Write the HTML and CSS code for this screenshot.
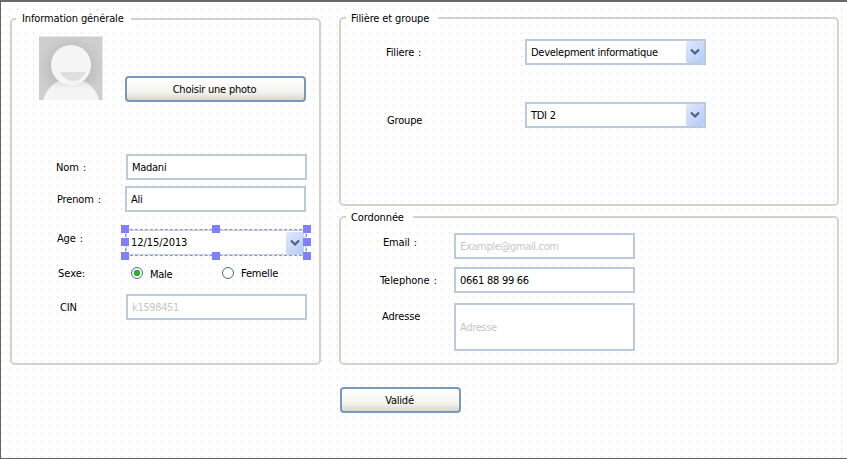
FILE: index.html
```html
<!DOCTYPE html>
<html lang="fr">
<head>
<meta charset="utf-8">
<title>Inscription</title>
<link rel="stylesheet" href="styles.css">
</head>
<body>
<main class="form">
  <section class="group group-info">
    <h2 class="legend legend-info"><span>Information générale</span></h2>
    <div class="photo-row">
      <svg class="avatar" width="64" height="64" viewBox="0 0 64 64">
        <defs>
          <radialGradient id="bg"><stop offset="0.5" stop-color="#bdbdbd"/><stop offset="1" stop-color="#cecece"/></radialGradient>
          <linearGradient id="body" x1="0" y1="0" x2="0" y2="1"><stop offset="0" stop-color="#dedede"/><stop offset="0.45" stop-color="#f5f5f5"/></linearGradient>
        </defs>
        <path fill="url(#bg)" d="M0 0h64v64H0z"/>
        <path fill="url(#body)" d="M4 64C8 52 16 45 24 44h17c9 2 16 9 19 20z"/>
        <circle cx="32" cy="29" r="20" fill="#f5f5f5"/>
        <path fill="#dedede" d="M21 36h26c-3 6-8 9-13 9s-10-3-13-9z"/>
        <path fill="none" stroke="#e6e6e6" d="M63.500 0v64M0 .5h64"/>
      </svg>
      <button class="button button-photo"><span>Choisir une photo</span></button>
    </div>
    <div class="row row-nom"><label>Nom :</label><div class="field"><span>Madani</span></div></div>
    <div class="row row-prenom"><label>Prenom :</label><div class="field"><span>Ali</span></div></div>
    <div class="row row-age"><label>Age :</label>
      <div class="field date"><span>12/15/2013</span><i class="arrow"><svg width="10" height="8" viewBox="0 0 10 8"><path d="M1 1.500l4 4 4-4"/></svg></i>
        <b class="handle nw"></b><b class="handle n"></b><b class="handle ne"></b><b class="handle w"></b><b class="handle e"></b><b class="handle sw"></b><b class="handle s"></b><b class="handle se"></b>
      </div>
    </div>
    <div class="row row-sexe"><label>Sexe:</label>
      <i class="radio checked"></i><span class="male">Male</span><i class="radio"></i><span class="femelle">Femelle</span>
    </div>
    <div class="row row-cin"><label>CIN</label><div class="field hint"><span>k1598451</span></div></div>
  </section>
  <div class="side">
    <section class="group group-filiere">
      <h2 class="legend legend-filiere"><span>Filière et groupe</span></h2>
      <div class="row row-filiere"><label>Filiere :</label><div class="field"><span>Develepment informatique</span><i class="arrow"><svg width="10" height="8" viewBox="0 0 10 8"><path d="M1 1.500l4 4 4-4"/></svg></i></div></div>
      <div class="row row-groupe"><label>Groupe</label><div class="field"><span>TDI 2</span><i class="arrow"><svg width="10" height="8" viewBox="0 0 10 8"><path d="M1 1.500l4 4 4-4"/></svg></i></div></div>
    </section>
    <section class="group group-contact">
      <h2 class="legend legend-contact"><span>Cordonnée</span></h2>
      <div class="row row-email"><label>Email :</label><div class="field hint"><span>Example@gmail.com</span></div></div>
      <div class="row row-tel"><label>Telephone :</label><div class="field"><span>0661 88 99 66</span></div></div>
      <div class="row row-adresse"><label>Adresse</label><div class="field hint tall"><span>Adresse</span></div></div>
    </section>
    <button class="button button-valid"><span>Validé</span></button>
  </div>
</main>
</body>
</html>
```
FILE: styles.css
```css
* { box-sizing: border-box; }
body { margin: 0; background: #fff; color: #000; font: 11px/14px "DejaVu Sans Condensed", "DejaVu Sans", sans-serif; font-stretch: condensed; letter-spacing: -0.27px; }
span, label { white-space: nowrap; }
label { letter-spacing: -0.15px; word-spacing: 1px; }
.form {
  width: 847px; height: 459px; display: flex; align-items: flex-start; gap: 18px;
  padding: 16px 0 0 9px; border: 1px solid #656565; border-right: 0; border-top: 2px solid #696969;
  background: conic-gradient(from 90deg at 7px 6px, #e5e5e5 90deg, transparent 0) -7px 0 / 8px 8px;
}
.group { border: 2px solid #d5d2cb; border-radius: 5px; }
.group-info { width: 311px; height: 347px; }
.side { width: 500px; margin-top: -1px; }
.group-filiere { height: 189px; }
.group-contact { height: 149px; margin-top: 10px; }
.legend { margin: -9px 0 0 4px; height: 16px; padding: 1px 0 0 6px; font: inherit; background: #fff; letter-spacing: -0.12px; }
.legend-info { width: 115px; }
.legend-filiere { width: 92px; margin-left: 5px; padding: 2px 0 0 5px; }
.legend-contact { width: 67px; margin-left: 5px; padding: 2px 0 0 5px; }
.photo-row { display: flex; align-items: flex-start; margin: 9px 0 0 27px; height: 118px; }
.avatar { display: block; }
.button { height: 26px; padding: 1px 2px 0 0; border: 2px solid #7699bc; border-radius: 4px; color: #000; font: inherit; letter-spacing: -0.22px; background: linear-gradient(#fff, #f4f4ee 65%, #d9d6cc); }
.button-photo { width: 181px; margin: 40px 0 0 22px; }
.button-valid { display: block; width: 121px; margin: 22px 0 0 1px; }
.row { display: flex; align-items: flex-start; }
.field { position: relative; display: flex; align-items: center; width: 181px; height: 26px; padding-left: 4px; border: 2px solid #bbcbdc; background: #fff; }
.field span { padding-top: 2px; }
.hint { color: #c6c6c6; }
.hint span { letter-spacing: -0.35px; }
.tall { height: 48px; }
.arrow { display: flex; align-items: center; justify-content: center; width: 18px; height: 22px; margin-left: auto; border-radius: 2px; background: linear-gradient(135deg, #e0e9fd, #b3caf7); }
.arrow path { fill: none; stroke: #4d6185; stroke-width: 2.200; }
.row-nom label { width: 70px; margin: 7px 0 0 44px; }
.row-prenom label { width: 68px; margin: 7px 0 0 45px; }
.row-age label { width: 68px; margin: 3px 0 0 45px; }
.row-sexe label { width: 73px; margin-left: 46px; letter-spacing: 0; }
.row-cin label { width: 67px; margin: 7px 0 0 47px; padding-left: 1px; }
.row-prenom { margin-top: 6px; }
.row-age { margin-top: 17px; }
.row-sexe { margin-top: 11px; height: 14px; }
.row-cin { margin-top: 13px; }
.date { border: 1px dashed #8b93c4; padding-left: 5px; box-shadow: inset 0 0 0 1px #c7d3d9; height: 27px; width: 182px; }
.date span { padding-top: 0; letter-spacing: -0.07px; }
.date .arrow { margin-right: 2px; }
.handle { position: absolute; width: 8px; height: 8px; background: #8080ff; }
.nw, .w, .sw { left: -5px; }
.n, .s { left: 86px; }
.ne, .e, .se { right: -5px; }
.nw, .n, .ne { top: -5px; }
.w, .e { top: 8px; }
.sw, .s, .se { bottom: -5px; }
.radio { width: 12px; height: 12px; margin-top: 0; border: 1px solid #486a8d; border-radius: 50%; background: #fff; }
.checked { background: radial-gradient(circle, #30b030 0 3px, #fff 3.600px); }
.male { width: 72px; margin: 1px 0 0 7px; }
.femelle { margin-left: 7px; letter-spacing: -0.2px; }
.row-filiere { margin-top: 13px; }
.row-filiere label { width: 139px; margin: 7px 0 0 45px; }
.row-groupe { margin-top: 37px; }
.row-groupe label { width: 138px; margin: 12px 0 0 46px; }
.row-email { margin-top: 8px; }
.row-email label { width: 71px; margin: 3px 0 0 42px; }
.row-tel { margin-top: 8px; }
.row-tel label { width: 74px; margin: 7px 0 0 39px; letter-spacing: -0.05px; }
.row-adresse { margin-top: 10px; }
.row-adresse label { width: 72px; margin: 7px 0 0 41px; }
```
